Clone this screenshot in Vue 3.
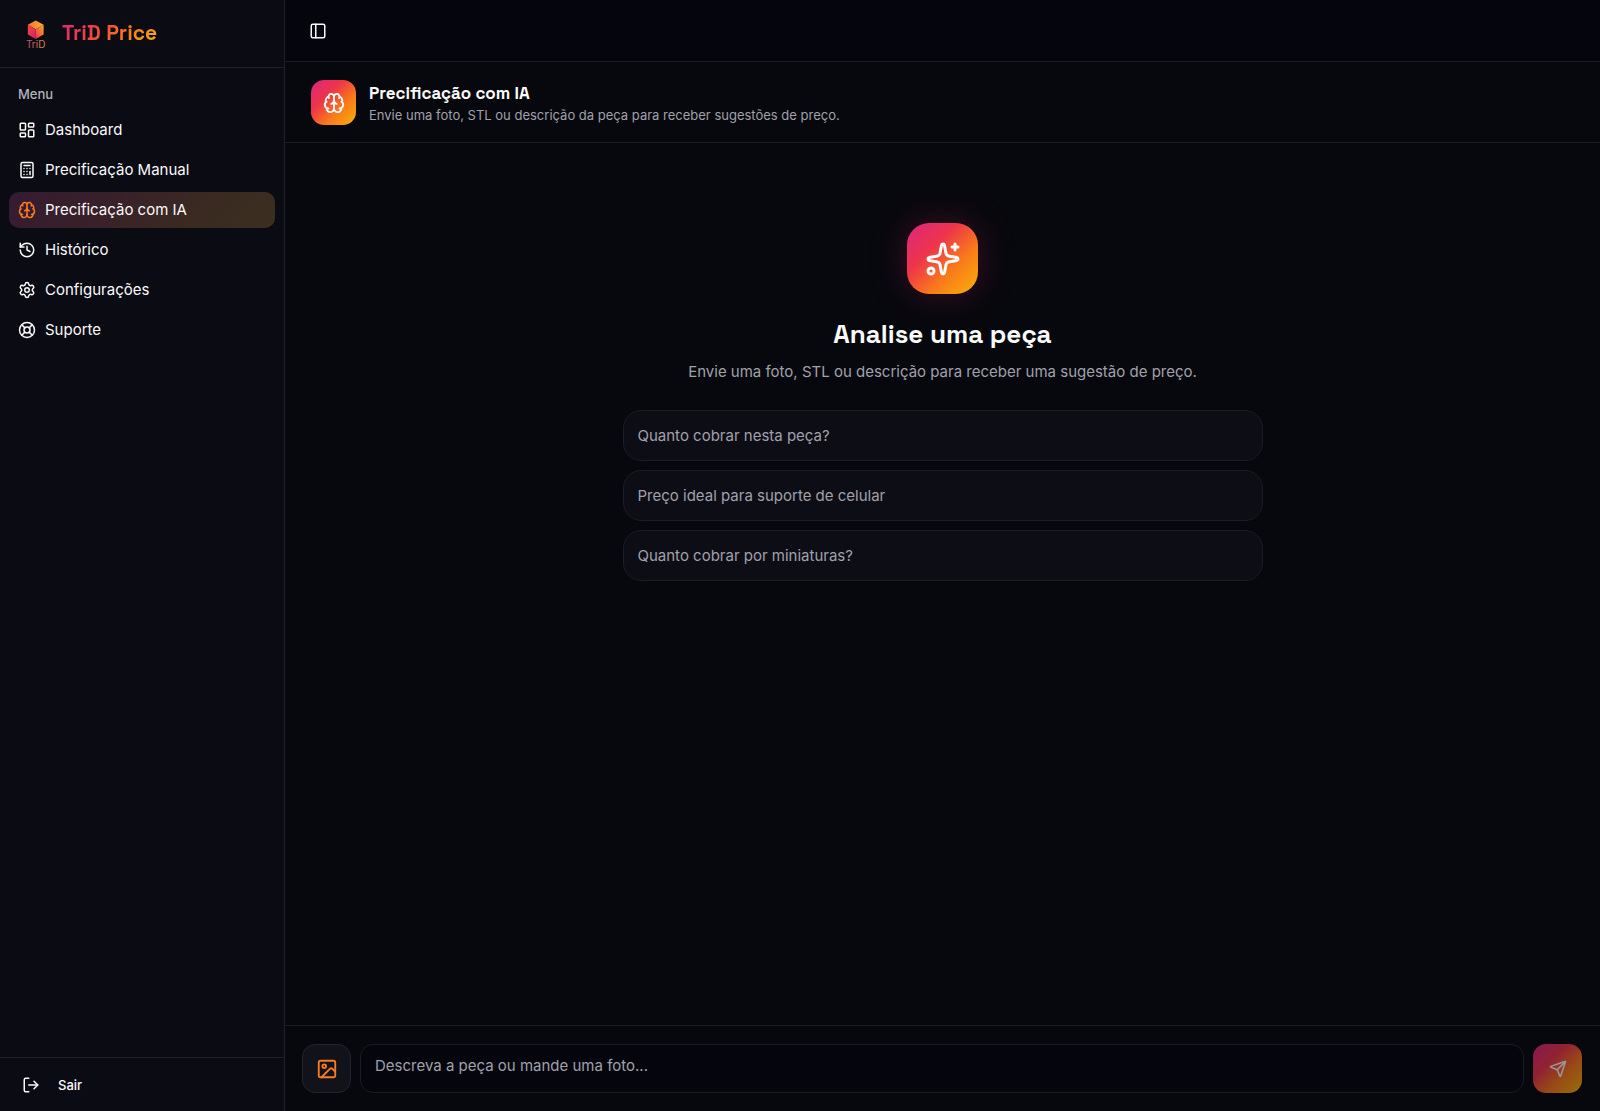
<template>
  <div class="layout">
    <aside class="sidebar">
      <div class="brand">
        <svg class="brand-logo" viewBox="0 0 36 36" aria-hidden="true">
          <defs>
            <linearGradient id="cube-top" x1="0" y1="0" x2="1" y2="0">
              <stop offset="0" stop-color="#f2703c" />
              <stop offset="1" stop-color="#fbb428" />
            </linearGradient>
            <linearGradient id="cube-left" x1="0" y1="0" x2="1" y2="1">
              <stop offset="0" stop-color="#f2483f" />
              <stop offset="1" stop-color="#d81e66" />
            </linearGradient>
            <linearGradient id="cube-right" x1="1" y1="0" x2="0" y2="1">
              <stop offset="0" stop-color="#fbaa26" />
              <stop offset="1" stop-color="#e5324f" />
            </linearGradient>
            <linearGradient id="logo-text" x1="0" y1="0" x2="1" y2="0">
              <stop offset="0" stop-color="#c9476f" />
              <stop offset="1" stop-color="#d98a4a" />
            </linearGradient>
          </defs>
          <path d="M17.7 5.5 L25.6 9.8 L17.7 14.2 L9.8 9.8 Z" fill="url(#cube-top)" />
          <path d="M9.8 9.8 L17.7 14.2 V24 L9.8 19.4 Z" fill="url(#cube-left)" />
          <path d="M25.6 9.8 L17.7 14.2 V24 L25.6 19.4 Z" fill="url(#cube-right)" />
          <text x="17.7" y="32.5" text-anchor="middle" fill="url(#logo-text)">TriD</text>
        </svg>
        <span class="brand-name">TriD Price</span>
      </div>

      <nav class="menu">
        <p class="menu-label">Menu</p>
        <a
          v-for="item in items"
          :key="item.label"
          href="#"
          :class="['menu-item', { active: item.label === current }]"
          @click.prevent="current = item.label"
        >
          <svg class="icon" viewBox="0 0 24 24" v-html="icons[item.icon]"></svg>
          <span>{{ item.label }}</span>
        </a>
      </nav>

      <div class="sidebar-footer">
        <button type="button" class="logout">
          <svg class="icon" viewBox="0 0 24 24" v-html="icons.logout"></svg>
          <span>Sair</span>
        </button>
      </div>
    </aside>

    <main class="main">
      <header class="topbar">
        <button type="button" class="toggle" aria-label="Alternar menu">
          <svg class="icon" viewBox="0 0 24 24" v-html="icons.panel"></svg>
        </button>
      </header>

      <section class="page-header">
        <div class="page-icon">
          <svg class="icon" viewBox="0 0 24 24" v-html="icons.brain"></svg>
        </div>
        <div>
          <h1>Precificação com IA</h1>
          <p>Envie uma foto, STL ou descrição da peça para receber sugestões de preço.</p>
        </div>
      </section>

      <section class="content">
        <div class="hero-icon">
          <svg class="icon" viewBox="0 0 24 24" v-html="icons.sparkles"></svg>
        </div>
        <h2>Analise uma peça</h2>
        <p class="hero-text">Envie uma foto, STL ou descrição para receber uma sugestão de preço.</p>
        <div class="suggestions">
          <button
            v-for="text in suggestions"
            :key="text"
            type="button"
            class="suggestion"
            @click="message = text"
          >
            {{ text }}
          </button>
        </div>
      </section>

      <form class="composer" @submit.prevent>
        <button type="button" class="attach" aria-label="Enviar imagem">
          <svg class="icon" viewBox="0 0 24 24" v-html="icons.image"></svg>
        </button>
        <textarea
          v-model="message"
          rows="1"
          aria-label="Mensagem"
          placeholder="Descreva a peça ou mande uma foto..."
        ></textarea>
        <button type="submit" class="send" aria-label="Enviar" :disabled="!message.trim()">
          <svg class="icon" viewBox="0 0 24 24" v-html="icons.send"></svg>
        </button>
      </form>
    </main>
  </div>
</template>

<script setup>
import { ref } from 'vue'

const current = ref('Precificação com IA')
const message = ref('')

const items = [
  { label: 'Dashboard', icon: 'dashboard' },
  { label: 'Precificação Manual', icon: 'calculator' },
  { label: 'Precificação com IA', icon: 'brain' },
  { label: 'Histórico', icon: 'history' },
  { label: 'Configurações', icon: 'settings' },
  { label: 'Suporte', icon: 'support' }
]

const suggestions = [
  'Quanto cobrar nesta peça?',
  'Preço ideal para suporte de celular',
  'Quanto cobrar por miniaturas?'
]

const icons = {
  dashboard:
    '<rect width="7" height="9" x="3" y="3" rx="1"/><rect width="7" height="5" x="14" y="3" rx="1"/><rect width="7" height="9" x="14" y="12" rx="1"/><rect width="7" height="5" x="3" y="16" rx="1"/>',
  calculator:
    '<rect width="16" height="20" x="4" y="2" rx="2"/><path d="M8 6h8M16 14v4M16 10h.01M12 10h.01M8 10h.01M12 14h.01M8 14h.01M12 18h.01M8 18h.01"/>',
  brain:
    '<path d="M12 18V5"/><path d="M15 13a4.17 4.17 0 0 1-3-4 4.17 4.17 0 0 1-3 4"/><path d="M17.598 6.5A3 3 0 1 0 12 5a3 3 0 1 0-5.598 1.5"/><path d="M17.997 5.125a4 4 0 0 1 2.526 5.77"/><path d="M18 18a4 4 0 0 0 2-7.464"/><path d="M19.967 17.483A4 4 0 1 1 12 18a4 4 0 1 1-7.967-.517"/><path d="M6 18a4 4 0 0 1-2-7.464"/><path d="M6.003 5.125a4 4 0 0 0-2.526 5.77"/>',
  history:
    '<path d="M3 12a9 9 0 1 0 9-9 9.75 9.75 0 0 0-6.74 2.74L3 8"/><path d="M3 3v5h5"/><path d="M12 7v5l4 2"/>',
  settings:
    '<path d="M9.671 4.136a2.34 2.34 0 0 1 4.659 0 2.34 2.34 0 0 0 3.319 1.915 2.34 2.34 0 0 1 2.33 4.033 2.34 2.34 0 0 0 0 3.831 2.34 2.34 0 0 1-2.33 4.033 2.34 2.34 0 0 0-3.319 1.915 2.34 2.34 0 0 1-4.659 0 2.34 2.34 0 0 0-3.32-1.915 2.34 2.34 0 0 1-2.33-4.033 2.34 2.34 0 0 0 0-3.831A2.34 2.34 0 0 1 6.35 6.051a2.34 2.34 0 0 0 3.319-1.915"/><circle cx="12" cy="12" r="3"/>',
  support:
    '<circle cx="12" cy="12" r="10"/><path d="m4.93 4.93 4.24 4.24M14.83 9.17l4.24-4.24M14.83 14.83l4.24 4.24M9.17 14.83l-4.24 4.24"/><circle cx="12" cy="12" r="4"/>',
  logout: '<path d="m16 17 5-5-5-5"/><path d="M21 12H9"/><path d="M9 21H5a2 2 0 0 1-2-2V5a2 2 0 0 1 2-2h4"/>',
  panel: '<rect width="18" height="18" x="3" y="3" rx="2"/><path d="M9 3v18"/>',
  sparkles:
    '<path d="M11.017 2.814a1 1 0 0 1 1.966 0l1.051 5.558a2 2 0 0 0 1.594 1.594l5.558 1.051a1 1 0 0 1 0 1.966l-5.558 1.051a2 2 0 0 0-1.594 1.594l-1.051 5.558a1 1 0 0 1-1.966 0l-1.051-5.558a2 2 0 0 0-1.594-1.594l-5.558-1.051a1 1 0 0 1 0-1.966l5.558-1.051a2 2 0 0 0 1.594-1.594z"/><path d="M20 2v4"/><path d="M22 4h-4"/><circle cx="4" cy="20" r="2"/>',
  image:
    '<rect width="18" height="18" x="3" y="3" rx="2"/><circle cx="9" cy="9" r="2"/><path d="m21 15-3.086-3.086a2 2 0 0 0-2.828 0L6 21"/>',
  send: '<path d="M14.536 21.686a.5.5 0 0 0 .937-.024l6.5-19a.496.496 0 0 0-.635-.635l-19 6.5a.5.5 0 0 0-.024.937l7.93 3.18a2 2 0 0 1 1.112 1.11z"/><path d="m21.854 2.147-10.94 10.939"/>'
}
</script>

<style>
body {
  margin: 0;
  background: #07080d;
}
</style>

<style scoped>
* {
  box-sizing: border-box;
}

.layout {
  display: flex;
  min-height: 100vh;
  font-family: Inter, sans-serif;
  font-size: 15px;
  line-height: 24px;
  color: #fafafa;
}

h1,
h2,
p {
  margin: 0;
}

button {
  padding: 0;
  border: none;
  background: none;
  color: inherit;
  font: inherit;
  cursor: pointer;
}

.icon {
  flex-shrink: 0;
  width: 18px;
  height: 18px;
  fill: none;
  stroke: currentColor;
  stroke-width: 2;
  stroke-linecap: round;
  stroke-linejoin: round;
}

/* Sidebar */
.sidebar {
  display: flex;
  flex-direction: column;
  flex-shrink: 0;
  width: 285px;
  border-right: 1px solid #20202a;
  background: #0b0b14;
}

.brand {
  display: flex;
  align-items: center;
  gap: 8px;
  height: 68px;
  padding: 0 18px 2px;
  border-bottom: 1px solid #20202a;
}

.brand-logo {
  width: 36px;
  height: 36px;
}

.brand-logo text {
  font-size: 10px;
}

.brand-name {
  background: linear-gradient(135deg, #dc2777, #ee4444 35%, #f97a1a 65%, #f9b208);
  background-clip: text;
  color: transparent;
  font-family: 'Space Grotesk', Inter, sans-serif;
  font-size: 21px;
  font-weight: 700;
}

.menu {
  display: flex;
  flex: 1;
  flex-direction: column;
  gap: 4px;
  padding: 9px;
}

.menu-label {
  padding: 5px 9px 2px;
  color: #b4b4bb;
  font-size: 13px;
  font-weight: 500;
}

.menu-item {
  display: flex;
  align-items: center;
  gap: 9px;
  height: 36px;
  padding: 0 9px;
  border-radius: 10px;
  color: #fafafa;
  text-decoration: none;
}

.menu-item.active {
  background: linear-gradient(135deg, #351b31, #38202a 35%, #3a2922 65%, #3b2f1f);
}

.menu-item.active .icon {
  color: #f97c22;
}

.sidebar-footer {
  display: flex;
  height: 54px;
  padding: 0 22px;
  border-top: 1px solid #20202a;
}

.logout {
  display: flex;
  flex: 1;
  align-items: center;
  gap: 18px;
  font-size: 13px;
  font-weight: 500;
}

/* Main column */
.main {
  display: flex;
  flex: 1;
  flex-direction: column;
  min-width: 0;
}

.topbar {
  display: flex;
  align-items: center;
  height: 62px;
  padding: 0 15px;
  border-bottom: 1px solid #1a1a23;
  background: #05050e;
}

.toggle {
  display: flex;
  align-items: center;
  justify-content: center;
  width: 36px;
  height: 36px;
}

.page-header {
  display: flex;
  align-items: center;
  gap: 13px;
  padding: 18px 26px 17px;
  border-bottom: 1px solid #1a1a21;
}

.page-icon {
  display: flex;
  align-items: center;
  justify-content: center;
  width: 45px;
  height: 45px;
  border-radius: 13px;
  background: linear-gradient(135deg, #dc2680, #ee344a 35%, #f97a1a 65%, #f9b208);
}

.page-icon .icon,
.attach .icon {
  width: 22px;
  height: 22px;
}

.page-header h1 {
  font-family: 'Space Grotesk', Inter, sans-serif;
  font-size: 17px;
  font-weight: 700;
  line-height: 26px;
}

.page-header p {
  color: #a1a1aa;
  font-size: 13px;
  line-height: 19px;
}

.content {
  display: flex;
  flex: 1;
  flex-direction: column;
  align-items: center;
  padding: 80px 18px 18px;
}

.hero-icon {
  display: flex;
  align-items: center;
  justify-content: center;
  width: 71px;
  height: 71px;
  margin-bottom: 22px;
  border-radius: 22px;
  background: linear-gradient(135deg, #dc2680, #ee344a 35%, #f97a1a 65%, #f9b208);
  box-shadow: 0 0 36px rgba(220, 38, 100, 0.25);
}

.hero-icon .icon {
  width: 36px;
  height: 36px;
}

.content h2 {
  font-family: 'Space Grotesk', Inter, sans-serif;
  font-size: 26px;
  font-weight: 700;
  line-height: 36px;
}

.hero-text {
  margin: 8px 0 26px;
  color: #a1a1aa;
}

.suggestions {
  display: flex;
  flex-direction: column;
  gap: 9px;
  width: 100%;
  max-width: 640px;
}

.suggestion {
  height: 51px;
  padding: 0 14px;
  border: 1px solid #1c1c24;
  border-radius: 18px;
  background: #0d0d16;
  color: #a1a1aa;
  text-align: left;
}

.suggestion:hover {
  color: #fafafa;
}

.composer {
  display: flex;
  gap: 9px;
  padding: 18px 18px 18px 17px;
  border-top: 1px solid #1a1a21;
}

.attach,
.send {
  display: flex;
  align-items: center;
  justify-content: center;
  flex-shrink: 0;
  width: 49px;
  height: 49px;
  border-radius: 13px;
}

.attach {
  border: 1px solid #23232d;
  background: #12121b;
  color: #f97c22;
}

.composer textarea {
  flex: 1;
  min-width: 0;
  height: 49px;
  padding: 9px 14px;
  border: 1px solid #1b1b24;
  border-radius: 13px;
  outline: none;
  background: #05050e;
  color: #fafafa;
  font: inherit;
  resize: none;
}

.composer textarea::placeholder {
  color: #a1a1aa;
}

.send {
  background: linear-gradient(135deg, #dc2680, #ee344a 35%, #f97a1a 65%, #f9b208);
}

.send:disabled {
  opacity: 0.6;
  cursor: default;
}

@media (max-width: 768px) {
  .sidebar {
    display: none;
  }
}
</style>
